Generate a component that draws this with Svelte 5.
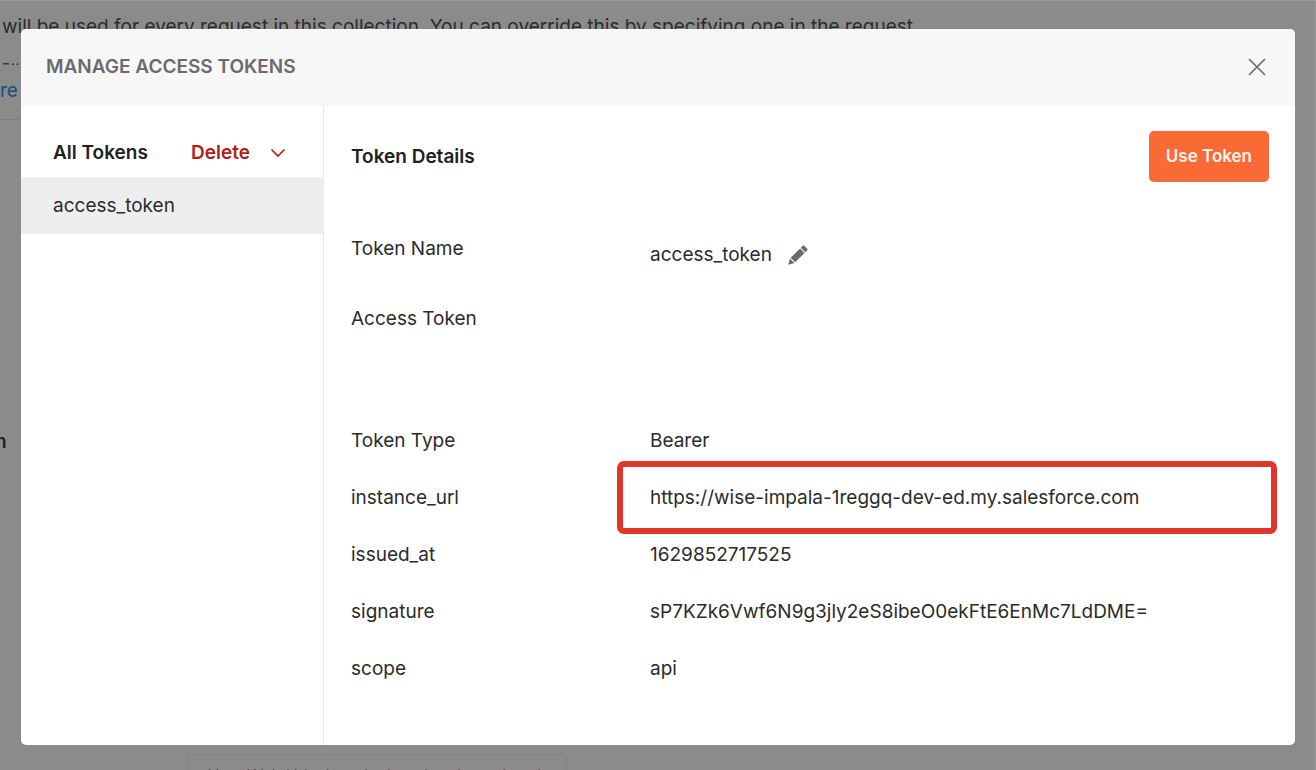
<script lang="ts">
	const tokens = ['access_token'];
	let selected = $state('access_token');

	const details = [
		{ label: 'Token Type', value: 'Bearer' },
		{ label: 'instance_url', value: 'https://wise-impala-1reggq-dev-ed.my.salesforce.com', highlight: true },
		{ label: 'issued_at', value: '1629852717525' },
		{ label: 'signature', value: 'sP7KZk6Vwf6N9g3jly2eS8ibeO0ekFtE6EnMc7LdDME=' },
		{ label: 'scope', value: 'api' }
	];
</script>

<div class="page" inert>
	<p class="intro">will be used for every request in this collection. You can override this by specifying one in the request.</p>
	<div class="more">
		<svg width="20" height="3" viewBox="0 0 20 3" fill="#3a3a3a">
			<path d="M3 0H9V1.5H3ZM12 .5H14V2H12ZM16.5 .5H18.5V2H16.5Z" />
		</svg>
		<a href="#more">re</a>
	</div>
	<h3 class="section">n</h3>
	<div class="field">Your Web Url when deployed to the web today</div>
</div>

<div class="backdrop">
	<div class="modal" role="dialog" aria-modal="true" aria-labelledby="modal-title">
		<header class="modal-header">
			<h1 id="modal-title">MANAGE ACCESS TOKENS</h1>
			<button class="close" aria-label="Close">
				<svg width="18" height="18" viewBox="0 0 18 18" fill="none" stroke="#6b6b6b" stroke-width="1.7">
					<path d="M1 1 17 17M17 1 1 17" />
				</svg>
			</button>
		</header>

		<div class="modal-body">
			<aside class="sidebar">
				<div class="sidebar-head">
					<h2>All Tokens</h2>
					<button class="delete">
						Delete
						<svg width="16" height="10" viewBox="0 0 16 10" fill="none" stroke="currentColor" stroke-width="1.7">
							<path d="M1.5 1.5 8 8 14.5 1.5" />
						</svg>
					</button>
				</div>
				{#each tokens as token}
					<button class="token" class:selected={token === selected} onclick={() => (selected = token)}>
						{token}
					</button>
				{/each}
			</aside>

			<main class="details">
				<div class="details-head">
					<h2>Token Details</h2>
					<button class="use">Use Token</button>
				</div>

				<dl>
					<div class="row name">
						<dt>Token Name</dt>
						<dd>
							{selected}
							<button class="edit" aria-label="Edit token name">
								<svg width="20" height="20" viewBox="0 0 20 20" fill="#6b6b6b">
									<path d="M0.3 19.7 2 13.6 6.4 18Z" />
									<path d="M2.7 12.8 12 3.5 16.5 8 7.2 17.3Z" />
									<path d="M12.7 2.8 14.9 .6Q15.5 0 16.1 .6L19.4 3.9Q20 4.5 19.4 5.1L17.2 7.3Z" />
								</svg>
							</button>
						</dd>
					</div>
					<div class="row access">
						<dt>Access Token</dt>
						<dd></dd>
					</div>
					{#each details as item}
						<div class="row">
							<dt>{item.label}</dt>
							<dd class:highlight={item.highlight}>{item.value}</dd>
						</div>
					{/each}
				</dl>
			</main>
		</div>
	</div>
</div>

<style>
	:global(body) {
		background: #8b8b8b;
	}

	.page,
	.backdrop {
		font-family: Inter, "Liberation Sans", sans-serif;
		font-size: 19px;
		line-height: 25px;
		color: #2b2b2b;
	}

	h1,
	h2,
	h3,
	p,
	dl,
	dd {
		margin: 0;
		font-size: inherit;
	}

	button {
		font: inherit;
		color: inherit;
		border: none;
		background: none;
		padding: 0;
		cursor: pointer;
	}

	svg {
		display: block;
	}

	/* Page under the dialog */
	.page {
		position: absolute;
		inset: 0;
		overflow: hidden;
		box-sizing: border-box;
		border-top: 1px solid #999;
		border-right: 1px solid #999;
	}

	.intro {
		padding: 13px 0 0 2px;
		white-space: nowrap;
	}

	.more {
		width: 50%;
		margin-top: 24px;
		padding-bottom: 16px;
		border-bottom: 1px solid #828282;
	}

	.more svg {
		margin-bottom: 12px;
	}

	.more a {
		color: #1d4c80;
		text-decoration: none;
	}

	.section {
		margin-top: 309px;
		margin-left: -5px;
		font-weight: 600;
		color: #222;
	}

	.field {
		width: 380px;
		box-sizing: border-box;
		margin: 300px 0 0 187px;
		padding: 8px 20px;
		border: 1px solid #828282;
		border-radius: 4px;
		font-size: 16px;
		white-space: nowrap;
		color: #5c4444;
	}

	/* Dialog */
	.backdrop {
		position: relative;
		padding: 29px 21px 25px;
	}

	.modal {
		background: #fff;
		border-radius: 5px;
		overflow: hidden;
	}

	.modal-header {
		display: flex;
		align-items: center;
		justify-content: space-between;
		padding: 25px 29px 27px 25px;
		background: #f7f7f7;
	}

	.modal-header h1 {
		font-weight: 600;
		color: #6b6b6b;
	}

	.modal-body {
		display: flex;
	}

	.sidebar {
		flex: 0 0 302px;
		border-right: 1px solid #e8e8e8;
	}

	.sidebar-head {
		display: flex;
		justify-content: space-between;
		padding: 34px 37px 12px 32px;
	}

	h2 {
		font-weight: 600;
		color: #212121;
	}

	.delete {
		display: flex;
		align-items: center;
		gap: 20px;
		font-weight: 600;
		color: #b0201a;
	}

	.token {
		display: block;
		width: 100%;
		padding: 16px 32px;
		text-align: left;
	}

	.token.selected {
		background: #eee;
	}

	.details {
		flex: 1;
		min-width: 0;
		padding: 25px 26px 64px 27px;
	}

	.details-head {
		display: flex;
		align-items: center;
		justify-content: space-between;
	}

	.use {
		padding: 13px 17px;
		border-radius: 5px;
		background: #f96a37;
		color: #fff4ec;
		font-size: 17px;
		font-weight: 600;
	}

	dl {
		margin-top: 54px;
	}

	.row {
		display: grid;
		grid-template-columns: 299px 1fr;
		margin-bottom: 32px;
	}

	.row:last-child {
		margin-bottom: 0;
	}

	.row.name dd {
		display: flex;
		align-items: center;
		gap: 16px;
		padding-top: 6px;
	}

	.row.name {
		margin-bottom: 39px;
	}

	.row.access {
		margin-bottom: 97px;
	}

	.highlight {
		position: relative;
	}

	/* Frame drawn around the value */
	.highlight::after {
		content: '';
		position: absolute;
		inset: -24px -8px -24px -33px;
		border: 6px solid #e0352b;
		border-radius: 7px;
		pointer-events: none;
	}
</style>
